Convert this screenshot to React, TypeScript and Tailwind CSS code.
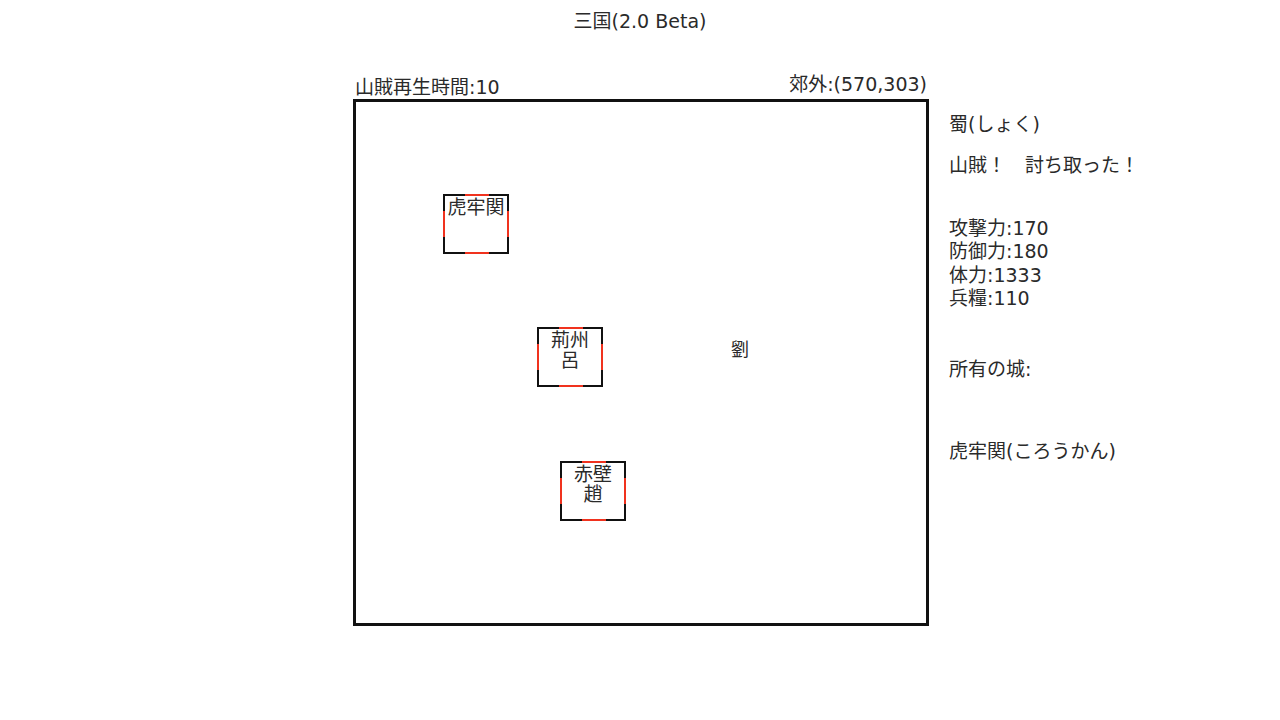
import React from "react";

const FONT = { fontFamily: '"DejaVu Sans", "Noto Sans CJK JP", sans-serif' };

function Castle({ x, y, lines }: { x: number; y: number; lines: string[] }) {
  return (
    <div
      className="absolute w-[66px] h-[60px] border-2 border-[#111] bg-white"
      style={{ left: x, top: y }}
    >
      <div className="absolute top-[-2px] left-[20px] w-[24px] h-[2px] bg-[#f0321e]" />
      <div className="absolute bottom-[-2px] left-[20px] w-[24px] h-[2px] bg-[#f0321e]" />
      <div className="absolute left-[-2px] top-[15px] w-[2px] h-[26px] bg-[#f0321e]" />
      <div className="absolute right-[-2px] top-[15px] w-[2px] h-[26px] bg-[#f0321e]" />
      <div className="flex flex-col items-center text-[19px] leading-[20px] text-[#2a2a2a] pt-[1px]">
        {lines.map((l) => (
          <span key={l}>{l}</span>
        ))}
      </div>
    </div>
  );
}

export default function App() {
  return (
    <div className="w-[1280px] h-[720px] bg-white text-[#2a2a2a] text-[19px] leading-[23.5px]" style={FONT}>
      <div className="pt-[10px] text-center">三国(2.0 Beta)</div>
      <div className="grid grid-cols-[353px_576px_1fr] mt-[42px]">
        <div />
        <div className="flex flex-col">
          <div className="flex justify-between items-end h-[23px] px-[2px]">
            <span className="translate-y-[1px]">山賊再生時間:10</span>
            <span className="-translate-y-[2px]">郊外:(570,303)</span>
          </div>
          <div className="relative h-[527px] border-[3px] border-[#111]">
            <Castle x={87} y={92} lines={["虎牢関"]} />
            <Castle x={181} y={225} lines={["荊州", "呂"]} />
            <Castle x={204} y={359} lines={["赤壁", "趙"]} />
            <span className="absolute left-[375px] top-[236px] text-[18px]">劉</span>
          </div>
        </div>
        <div className="pl-[20px] flex flex-col">
          <div className="mt-[37px]">蜀(しょく)</div>
          <div className="mt-[17.5px]">山賊！　討ち取った！</div>
          <div className="mt-[39.5px] flex flex-col">
            <span>攻撃力:170</span>
            <span>防御力:180</span>
            <span>体力:1333</span>
            <span>兵糧:110</span>
          </div>
          <div className="mt-[47px]">所有の城:</div>
          <div className="mt-[58.5px]">虎牢関(ころうかん)</div>
        </div>
      </div>
    </div>
  );
}
